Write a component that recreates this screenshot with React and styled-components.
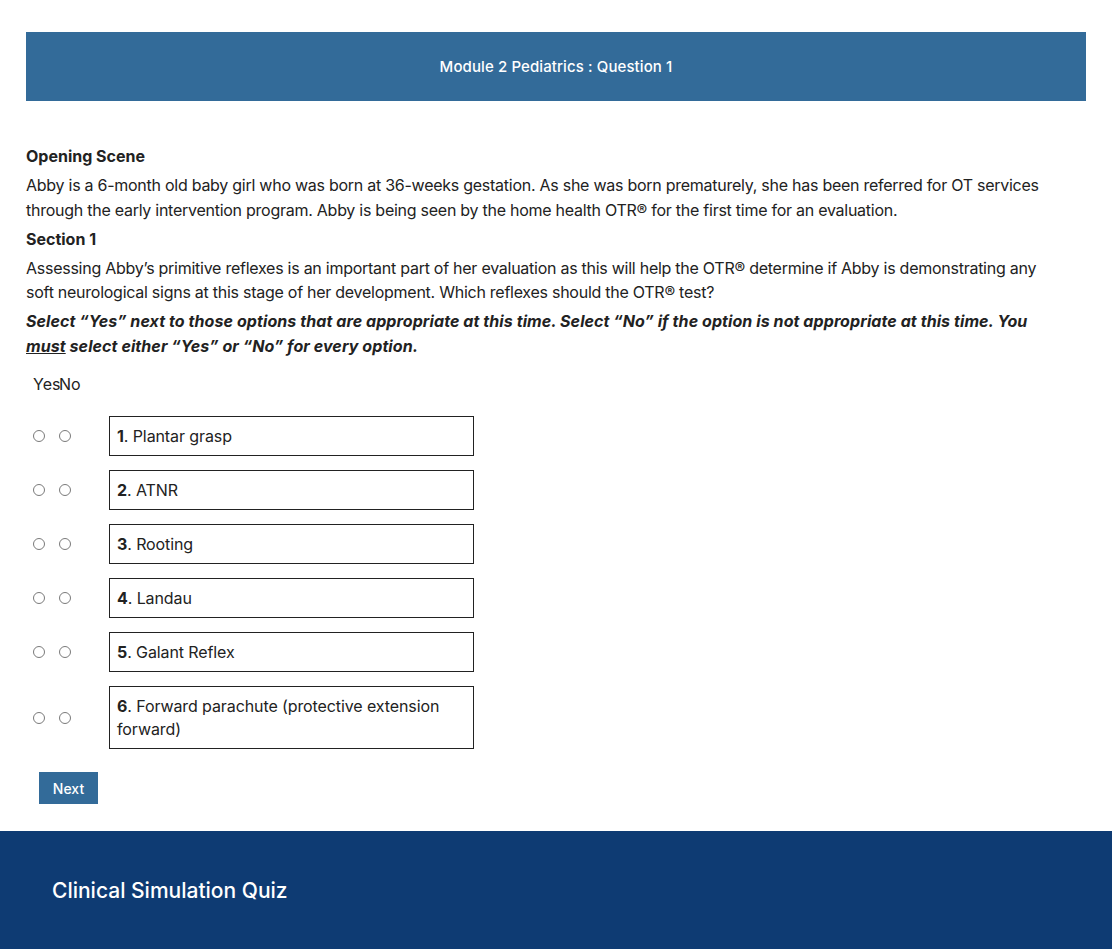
import React from "react";
import styled, { createGlobalStyle } from "styled-components";

const GlobalStyle = createGlobalStyle`
  body {
    margin: 0;
    background: #ffffff;
    font-family: Inter, "Noto Sans", "Liberation Sans", sans-serif;
    color: #222222;
  }
`

const Page = styled.div`
  width: 100%;
`

const Main = styled.div`
  padding: 32px 26px 0 26px;
`

const TitleBar = styled.div`
  height: 69px;
  background-color: #336b99;
  color: #ffffff;
  display: flex;
  align-items: center;
  justify-content: center;
  font-size: 15px;
  font-weight: 500;
  letter-spacing: 0.1px;
`

const Content = styled.div`
  margin-top: 43px;
  padding-right: 26px;
  display: flex;
  flex-direction: column;
  gap: 4.5px;
  font-size: 16px;
  line-height: 24.5px;
`

const Heading = styled.div`
  font-weight: 700;
`

const Paragraph = styled.div`
  font-weight: 400;
  letter-spacing: -0.26px;
`

const Instruction = styled.div`
  font-weight: 700;
  font-style: italic;
  letter-spacing: 0.08px;
`

const Options = styled.div`
  margin-top: 14px;
  padding-left: 7px;
  display: flex;
  flex-direction: column;
  gap: 14px;
`

const LabelRow = styled.div`
  display: flex;
  font-size: 16px;
  line-height: 24px;
  margin-bottom: 6px;
`

const LabelCell = styled.span`
  width: ${(p) => p.w}px;
`

const OptionRow = styled.div`
  display: flex;
  align-items: center;
`

const RadioCell = styled.div`
  width: 26px;
  display: flex;
`

const Radio = styled.input.attrs({ type: "radio" })`
  appearance: none;
  margin: 0;
  width: 12px;
  height: 12px;
  border: 1px solid #7a7a7a;
  border-radius: 50%;
  background: #ffffff;
`

const OptionBox = styled.div`
  margin-left: 24px;
  width: 365px;
  box-sizing: border-box;
  border: 1px solid #222222;
  padding: 7.5px 7px;
  font-size: 16px;
  line-height: 23px;
  letter-spacing: -0.1px;
`

const Num = styled.b`
  font-weight: 700;
`

const NextButton = styled.button`
  margin: 23px 0 0 13px;
  width: 59px;
  height: 32px;
  border: none;
  background-color: #336b99;
  color: #ffffff;
  font-family: inherit;
  font-size: 14px;
  font-weight: 500;
  cursor: pointer;
`

const Footer = styled.div`
  margin-top: 27px;
  height: 118px;
  background-color: #0e3b73;
  color: #ffffff;
  display: flex;
  align-items: center;
  padding-left: 52px;
  font-size: 21px;
  font-weight: 500;
`

const options = [
  "Plantar grasp",
  "ATNR",
  "Rooting",
  "Landau",
  "Galant Reflex",
  "Forward parachute (protective extension forward)",
];

export default function App() {
  return (
    <Page>
      <GlobalStyle />
      <Main>
        <TitleBar>Module 2 Pediatrics : Question 1</TitleBar>
        <Content>
          <Heading>Opening Scene</Heading>
          <Paragraph>
            Abby is a 6-month old baby girl who was born at 36-weeks gestation. As she was born prematurely, she has been referred for OT services through the early intervention program. Abby is being seen by the home health OTR® for the first time for an evaluation.
          </Paragraph>
          <Heading>Section 1</Heading>
          <Paragraph>
            Assessing Abby’s primitive reflexes is an important part of her evaluation as this will help the OTR® determine if Abby is demonstrating any soft neurological signs at this stage of her development. Which reflexes should the OTR® test?
          </Paragraph>
          <Instruction>
            Select “Yes” next to those options that are appropriate at this time. Select “No” if the option is not appropriate at this time. You <u>must</u> select either “Yes” or “No” for every option.
          </Instruction>
        </Content>
        <Options>
          <LabelRow>
            <LabelCell w={26}>Yes</LabelCell>
            <LabelCell w={26}>No</LabelCell>
          </LabelRow>
          {options.map((o, i) => (
            <OptionRow key={i}>
              <RadioCell><Radio name={"q" + i} value="yes" /></RadioCell>
              <RadioCell><Radio name={"q" + i} value="no" /></RadioCell>
              <OptionBox>
                <Num>{i + 1}</Num>. {o}
              </OptionBox>
            </OptionRow>
          ))}
        </Options>
        <NextButton>Next</NextButton>
      </Main>
      <Footer>Clinical Simulation Quiz</Footer>
    </Page>
  );
}
